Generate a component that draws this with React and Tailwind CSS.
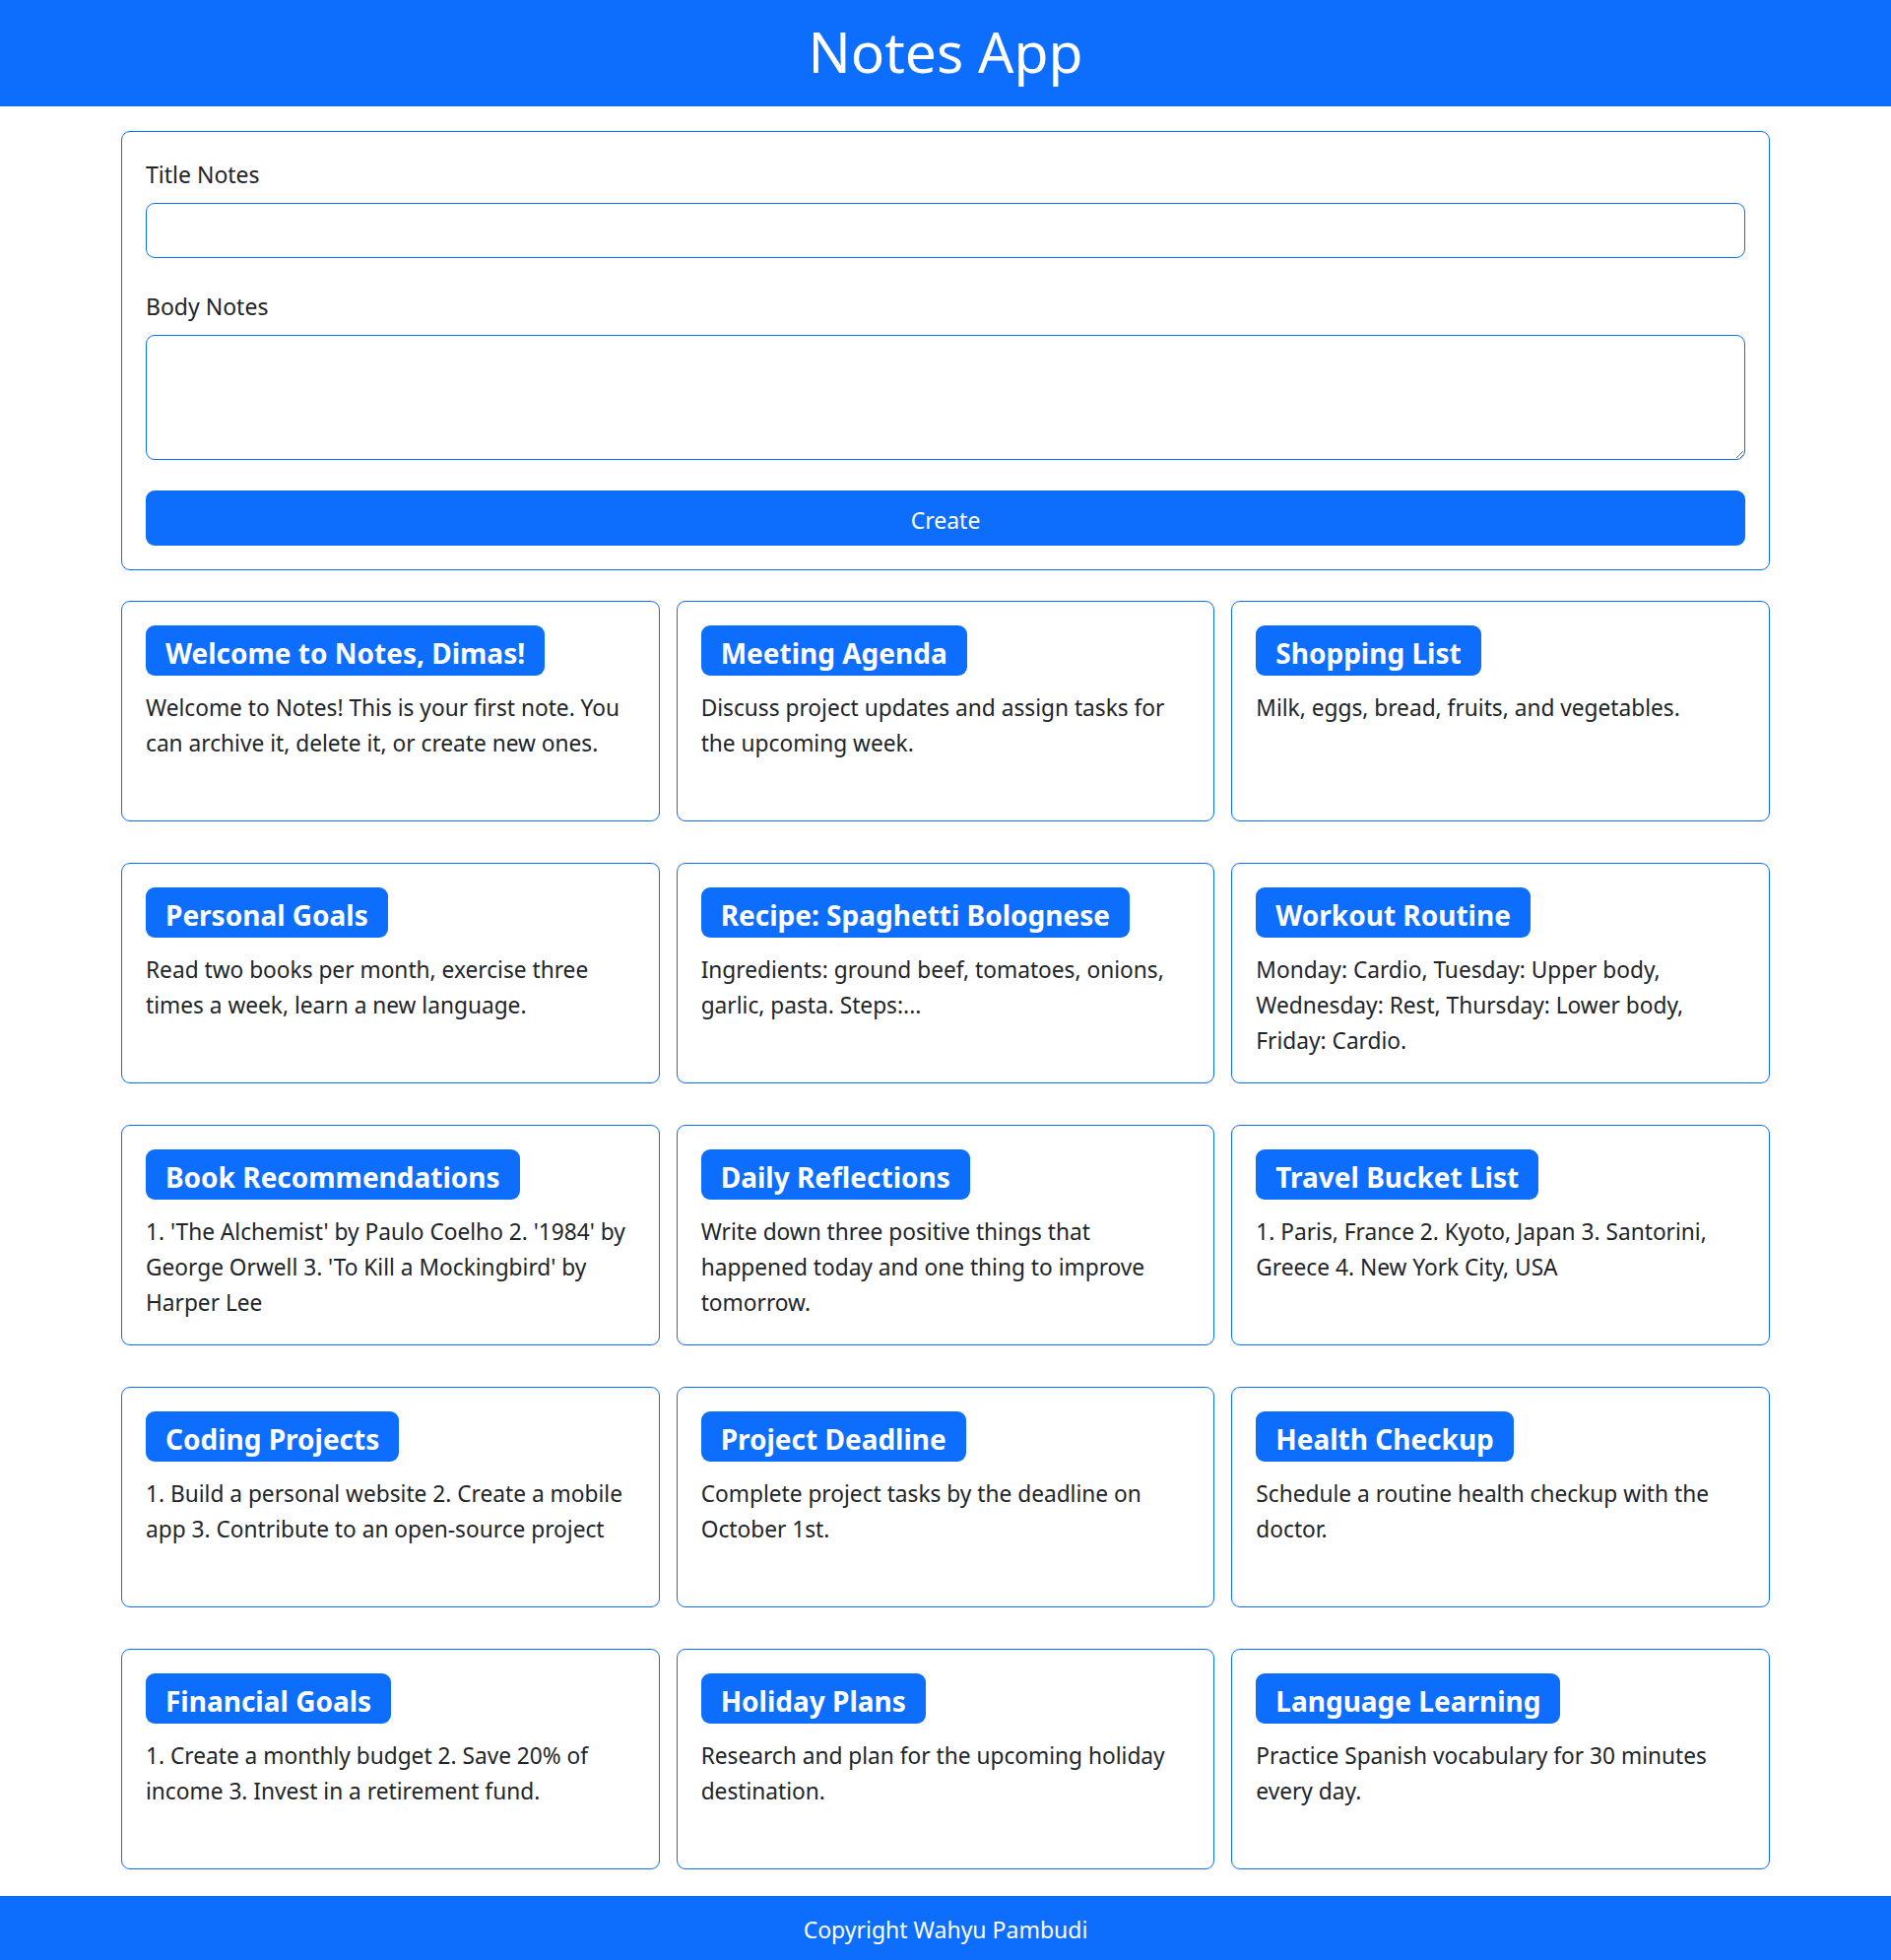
import React from 'react';

const notes = [
  { id: 1, title: 'Welcome to Notes, Dimas!', body: 'Welcome to Notes! This is your first note. You can archive it, delete it, or create new ones.' },
  { id: 2, title: 'Meeting Agenda', body: 'Discuss project updates and assign tasks for the upcoming week.' },
  { id: 3, title: 'Shopping List', body: 'Milk, eggs, bread, fruits, and vegetables.' },
  { id: 4, title: 'Personal Goals', body: 'Read two books per month, exercise three times a week, learn a new language.' },
  { id: 5, title: 'Recipe: Spaghetti Bolognese', body: 'Ingredients: ground beef, tomatoes, onions, garlic, pasta. Steps:...' },
  { id: 6, title: 'Workout Routine', body: 'Monday: Cardio, Tuesday: Upper body, Wednesday: Rest, Thursday: Lower body, Friday: Cardio.' },
  { id: 7, title: 'Book Recommendations', body: "1. 'The Alchemist' by Paulo Coelho 2. '1984' by George Orwell 3. 'To Kill a Mockingbird' by Harper Lee" },
  { id: 8, title: 'Daily Reflections', body: 'Write down three positive things that happened today and one thing to improve tomorrow.' },
  { id: 9, title: 'Travel Bucket List', body: '1. Paris, France 2. Kyoto, Japan 3. Santorini, Greece 4. New York City, USA' },
  { id: 10, title: 'Coding Projects', body: '1. Build a personal website 2. Create a mobile app 3. Contribute to an open-source project' },
  { id: 11, title: 'Project Deadline', body: 'Complete project tasks by the deadline on October 1st.' },
  { id: 12, title: 'Health Checkup', body: 'Schedule a routine health checkup with the doctor.' },
  { id: 13, title: 'Financial Goals', body: '1. Create a monthly budget 2. Save 20% of income 3. Invest in a retirement fund.' },
  { id: 14, title: 'Holiday Plans', body: 'Research and plan for the upcoming holiday destination.' },
  { id: 15, title: 'Language Learning', body: 'Practice Spanish vocabulary for 30 minutes every day.' },
];

const NoteCard = ({ note }) => (
  <div className="h-[224px] border border-[#0d6efd] rounded-[9px] p-6 bg-white">
    <h5 className="inline-block bg-[#0d6efd] text-white font-bold text-[28px] leading-[36px] px-[20px] pt-[9.5px] pb-[5.5px] rounded-[9px] mb-3">
      {note.title}
    </h5>
    <p className="text-[22.7px] leading-[36px] pt-[3px]">{note.body}</p>
  </div>
);

export default function App() {
  return (
    <div className="min-h-screen bg-white text-[#212529] font-['Noto_Sans',sans-serif]">
      {/* Header */}
      <header className="h-[108px] bg-[#0d6efd] flex items-center justify-center pb-[5px]">
        <h1 className="text-white text-[57px] leading-[72px] font-normal">Notes App</h1>
      </header>

      <main className="w-[1710px] mx-auto px-[18px] pt-[25px] pb-[27px]">
        {/* Create form */}
        <form className="border border-[#0d6efd] rounded-[9px] p-6" onSubmit={(e) => e.preventDefault()}>
          <label className="block text-[23px] leading-[36px] pt-[1px] mb-[11px]">Title Notes</label>
          <input
            type="text"
            className="block w-full h-[56px] border border-[#0d6efd] rounded-[9px] px-4 text-[23px] outline-none"
          />
          <label className="block text-[23px] leading-[36px] mt-[30px] pt-[1px] mb-[11px]">Body Notes</label>
          <textarea className="block w-full h-[127px] border border-[#0d6efd] rounded-[9px] px-4 py-2 text-[23px] outline-none" />
          <button
            type="submit"
            className="mt-[31px] w-full h-[56px] bg-[#0d6efd] text-white text-[23px] rounded-[9px] pt-[4px]"
          >
            Create
          </button>
        </form>

        {/* Notes list */}
        <div className="grid grid-cols-3 gap-x-[17px] gap-y-[42px] mt-[31px]">
          {notes.map((note) => (
            <NoteCard key={note.id} note={note} />
          ))}
        </div>
      </main>

      {/* Footer */}
      <footer className="h-[65px] bg-[#0d6efd] flex items-center justify-center pt-[4px]">
        <p className="text-white text-[23px]">Copyright Wahyu Pambudi</p>
      </footer>
    </div>
  );
}
